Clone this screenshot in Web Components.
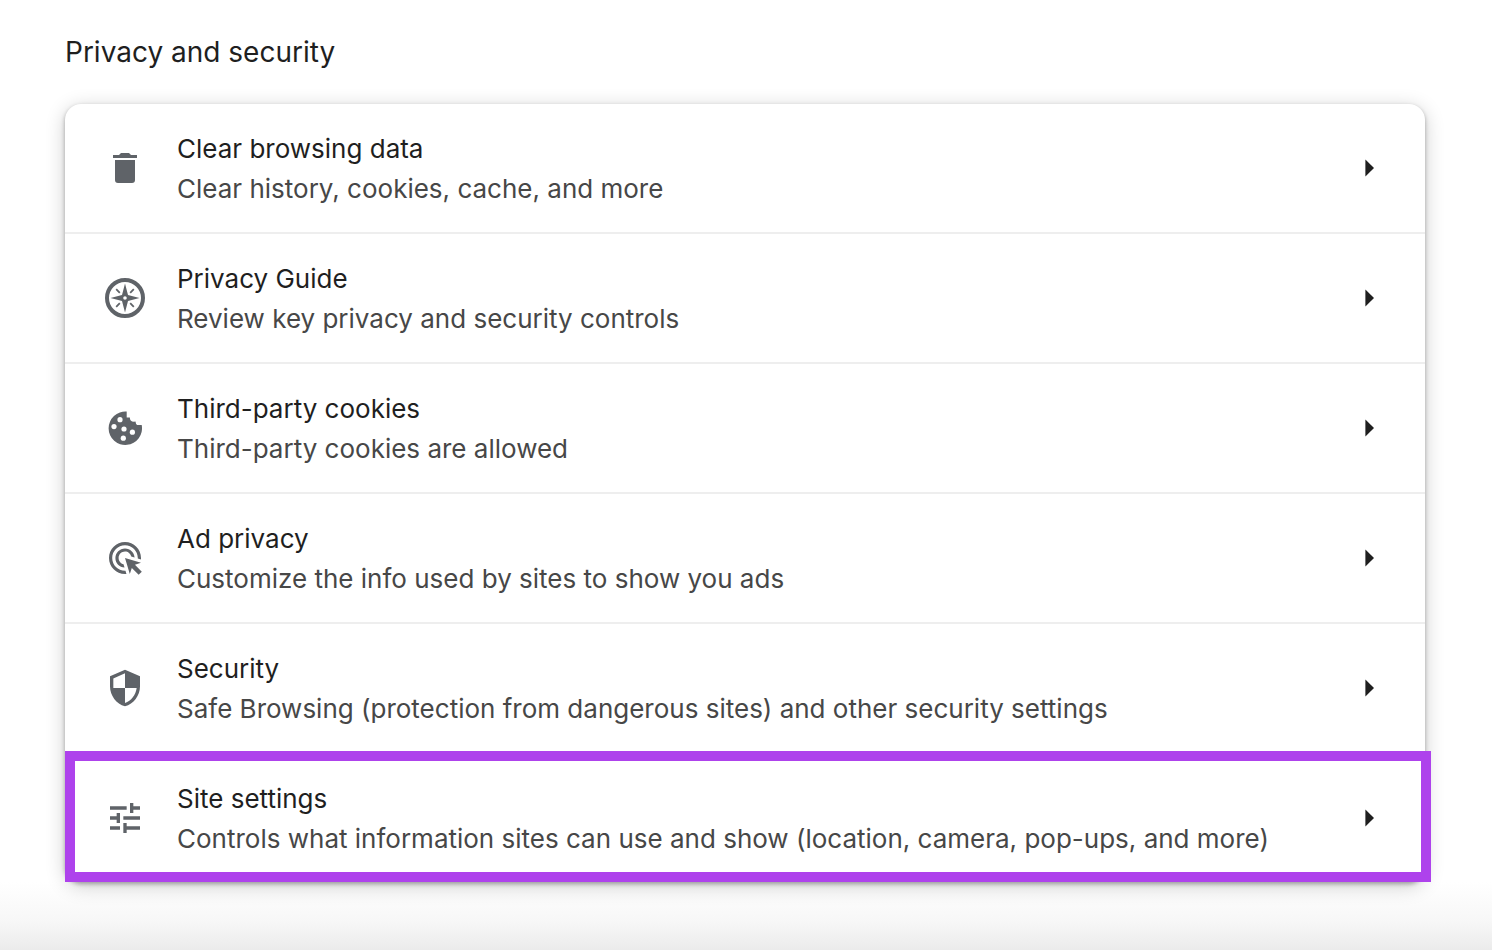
<!DOCTYPE html>
<html lang="en">
<head>
<meta charset="utf-8">
<meta name="viewport" content="width=device-width, initial-scale=1">
<title>Settings - Privacy and security</title>
<style>
  html { min-height: 100%; background: #fff; }
  body { margin: 0; font-family: Inter, "Liberation Sans", sans-serif; color: #1f1f1f; }
</style>
</head>
<body>
<settings-page>
  <settings-section heading="Privacy and security">
    <settings-row icon="trash">Clear browsing data<span slot="detail">Clear history, cookies, cache, and more</span></settings-row>
    <settings-row icon="compass">Privacy Guide<span slot="detail">Review key privacy and security controls</span></settings-row>
    <settings-row icon="cookie">Third-party cookies<span slot="detail">Third-party cookies are allowed</span></settings-row>
    <settings-row icon="ads">Ad privacy<span slot="detail">Customize the info used by sites to show you ads</span></settings-row>
    <settings-row icon="shield">Security<span slot="detail">Safe Browsing (protection from dangerous sites) and other security settings</span></settings-row>
    <settings-row icon="tune" highlighted>Site settings<span slot="detail">Controls what information sites can use and show (location, camera, pop-ups, and more)</span></settings-row>
  </settings-section>
</settings-page>

<script>
const ICONS = {
  trash: ['0 0 40 40', '<path d="M8 7h6l2-2h8l2 2h6v3H8zM10 12h20v20a3 3 0 0 1-3 3H13a3 3 0 0 1-3-3z"/>'],
  compass: ['0 0 40 40', '<circle cx="20" cy="20" r="18" fill="none" stroke="currentColor" stroke-width="4"/><path fill-rule="evenodd" d="M20 5.5l3 11.500L34.500 20l-11.500 3L20 34.500l-3-11.500L5.500 20l11.500-3zM20 18.200a1.800 1.800 0 1 0 0 3.600a1.800 1.800 0 0 0 0-3.600z"/><path d="M11.200 11.200l3.600 3.600M28.800 11.200l-3.600 3.600M11.200 28.800l3.600-3.600M28.800 28.800l-3.600-3.600" stroke="currentColor" stroke-width="1.800"/>'],
  cookie: ['0 0 40 40', '<path d="M21.700 3.600A16.700 16.700 0 1 0 36.700 17h-4.500q-1.600-.8-1.700-3.400q-3.300.6-4.800-1.200q-1-1.400-.8-3h-3.200z"/><g fill="#fff"><circle cx="15" cy="11.700" r="2.600"/><circle cx="9" cy="18.600" r="2.600"/><circle cx="19" cy="21" r="2.600"/><circle cx="27.400" cy="24.200" r="2.600"/><circle cx="18.300" cy="30.200" r="2.600"/></g>'],
  ads: ['-.5 -.5 25 25', '<path d="M11.710 17.990C8.530 17.840 6 15.220 6 12c0-3.310 2.690-6 6-6 3.220 0 5.840 2.530 5.990 5.710l-2.100-.63C15.480 9.310 13.890 8 12 8c-2.210 0-4 1.790-4 4 0 1.890 1.310 3.480 3.080 3.890zM22 12c0 .3-.01.6-.04.9l-1.970-.59C20 12.210 20 12.100 20 12c0-4.420-3.580-8-8-8s-8 3.580-8 8 3.580 8 8 8c.1 0 .21 0 .31-.01l.59 1.970C12.600 21.990 12.300 22 12 22 6.480 22 2 17.520 2 12S6.480 2 12 2s10 4.480 10 10zM18.230 16.260L22 15l-10-3 3 10 1.260-3.770 4.270 4.270 1.980-1.980z"/>'],
  shield: ['0 0 24 24', '<path d="M12 1L3 5v6c0 5.550 3.840 10.740 9 12 5.160-1.260 9-6.450 9-12V5zm0 10.990h7c-.53 4.120-3.280 7.790-7 8.940V12H5V6.300l7-3.110z"/>'],
  tune: ['0 0 24 24', '<path d="M3 17v2h6v-2zM3 5v2h10V5zm10 16v-2h8v-2h-8v-2h-2v6zM7 9v2H3v2h4v2h2V9zm14 4v-2H11v2zm-6-4h2V7h4V5h-4V3h-2z"/>']
};

customElements.define('settings-icon', class extends HTMLElement {
  connectedCallback() {
    if (this.shadowRoot) return;
    const [box, art] = ICONS[this.getAttribute('name')];
    this.attachShadow({ mode: 'open' }).innerHTML = `
      <style>
        :host { display: block; flex: none; width: 40px; height: 40px; color: #5f6368; }
        svg { display: block; width: 100%; height: 100%; }
      </style>
      <svg viewBox="${box}" fill="currentColor" aria-hidden="true">${art}</svg>`;
  }
});

customElements.define('settings-row', class extends HTMLElement {
  connectedCallback() {
    if (this.shadowRoot) return;
    this.attachShadow({ mode: 'open' }).innerHTML = `
      <style>
        :host { display: block; position: relative; }
        :host(:not(:first-of-type)) { border-top: 2px solid #eee; }
        button {
          display: flex; align-items: center; gap: 32px; width: 100%; min-height: 128px;
          box-sizing: border-box; margin: 0; padding: 16px 48px 16px 40px; border: 0;
          background: none; font: inherit; color: inherit; text-align: left; cursor: pointer;
        }
        .text { flex: 1; min-width: 0; display: flex; flex-direction: column; padding-top: 2px; font-size: 26px; line-height: 40px; }
        .detail { color: #474747; }
        .arrow { flex: none; width: 12px; height: 20px; display: block; }
        :host([highlighted])::after {
          content: ""; position: absolute; inset: -3px -6px 0 0;
          border: 10px solid #ae42ec; pointer-events: none;
        }
      </style>
      <button type="button">
        <settings-icon name="${this.getAttribute('icon')}"></settings-icon>
        <span class="text"><span><slot></slot></span><span class="detail"><slot name="detail"></slot></span></span>
        <svg class="arrow" viewBox="0 0 12 20" fill="#1f1f1f" aria-hidden="true"><path d="M.4 1.400L9 10L.4 18.600z"/></svg>
      </button>`;
  }
});

customElements.define('settings-section', class extends HTMLElement {
  connectedCallback() {
    if (this.shadowRoot) return;
    this.attachShadow({ mode: 'open' }).innerHTML = `
      <style>
        :host { display: block; }
        h2 { margin: 0 0 32px; font-size: 28px; line-height: 40px; font-weight: 400; }
        .card {
          border-radius: 16px; background: #fff;
          box-shadow: 0 2px 4px rgba(0, 0, 0, .3), 0 4px 20px rgba(0, 0, 0, .2);
        }
      </style>
      <h2>${this.getAttribute('heading')}</h2>
      <div class="card"><slot></slot></div>`;
  }
});

customElements.define('settings-page', class extends HTMLElement {
  connectedCallback() {
    if (this.shadowRoot) return;
    this.attachShadow({ mode: 'open' }).innerHTML = `
      <style>
        :host {
          display: block; box-sizing: border-box; min-height: 100vh; padding: 32px 67px 64px 65px;
          background: linear-gradient(to top, #ebebeb, #f7f7f7 28px, #fff 68px);
        }
      </style>
      <slot></slot>`;
  }
});
</script>
</body>
</html>
